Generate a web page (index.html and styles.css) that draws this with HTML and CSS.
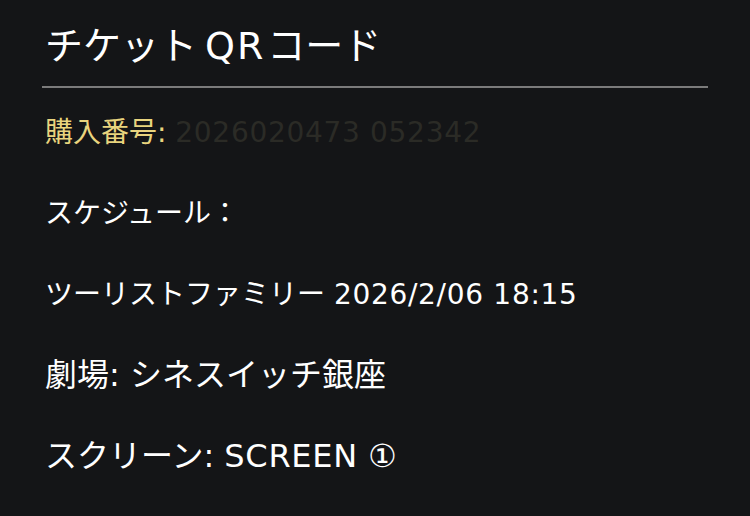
FILE: index.html
```html
<!DOCTYPE html>
<html lang="ja">
<head>
  <meta charset="UTF-8" />
  <meta name="viewport" content="width=device-width, initial-scale=1.0"/>
  <title>チケットQRコード</title>
  <link rel="stylesheet" href="styles.css">
</head>
<body>

  <!-- Ticket panel -->
  <div class="ticket-panel">
    <header class="ticket-header">
      <h1>チケット<span class="latin qr">QR</span>コード</h1>
    </header>

    <div class="ticket-info">
      <p class="info-row small order-no">購入番号: <span class="latin order-value">2026020473 052342</span></p>
      <p class="info-row small">スケジュール：</p>
      <p class="info-row small">ツーリストファミリー <span class="latin">2026/2/06 18:15</span></p>
      <p class="info-row">劇場: シネスイッチ銀座</p>
      <p class="info-row">スクリーン: <span class="latin">SCREEN</span> ①</p>
    </div>
  </div>

</body>
</html>
```

FILE: styles.css
```css
:root {
  --bg-color: #141517;
  --text-color: #ffffff;
  --accent-color: #e9d47e;
  --rule-color: #7b7b7b;
}

body {
  margin: 0;
  background-color: var(--bg-color);
  color: var(--text-color);
  font-family: "DejaVu Sans", "Noto Sans CJK JP", sans-serif;
}

.ticket-panel {
  padding: 0 42px;
}

.ticket-header {
  border-bottom: 2px solid var(--rule-color);
  padding: 23px 3px 17px;
}

.ticket-header h1 {
  margin: 0;
  font-size: 38px;
  font-weight: 400;
  line-height: 46px;
}

.ticket-header .qr {
  letter-spacing: 2px;
  padding-left: 8px;
  padding-right: 2px;
}

.latin {
  letter-spacing: 0.7px;
}

.ticket-info {
  padding: 4px 3px 0;
}

.info-row {
  margin: 0;
  font-size: 32px;
  line-height: 81px;
  height: 81px;
  white-space: nowrap;
}

.info-row.small {
  font-size: 28px;
}

.order-no {
  color: var(--accent-color);
}

.order-value {
  color: #2b2b26;
}
```
